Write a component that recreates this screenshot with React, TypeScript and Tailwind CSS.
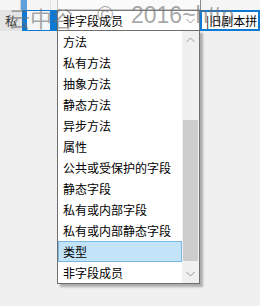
import React from "react";

const items = [
  "方法",
  "私有方法",
  "抽象方法",
  "静态方法",
  "异步方法",
  "属性",
  "公共或受保护的字段",
  "静态字段",
  "私有或内部字段",
  "私有或内部静态字段",
  "类型",
  "非字段成员",
];

function Chevron({ up }: { up?: boolean }) {
  return (
    <svg width="9" height="6" viewBox="0 0 9 6" className="block">
      <path
        d={up ? "M0.5 5 L4.5 1 L8.5 5" : "M0.5 1 L4.5 5 L8.5 1"}
        fill="none"
        stroke="#9a9a9a"
        strokeWidth="1"
      />
    </svg>
  );
}

export default function App() {
  return (
    <div className="relative w-[260px] h-[306px] overflow-hidden bg-[#f0f0f0] font-['Noto_Sans_CJK_SC',sans-serif] text-[12px] text-black">
      {/* top strip (previous row, cropped) */}
      <div className="flex h-[10px] bg-[#f5f5f5]">
        <div className="w-[21px] border-r border-[#d0d0d0]" />
        <div className="w-[6px] bg-[#5fa0dc]" />
        <div className="w-[24px] border-r border-[#e2e2e2]" />
        <div className="w-[6px]" />
        <div className="w-[143px] border-l border-b border-[#c8c8c8] bg-[#fafafa]" />
        <div className="flex-1 border-l border-[#8a8a8a]" />
      </div>

      {/* navigation bar row */}
      <div className="flex h-[21px]">
        <div className="w-[22px] bg-[#e4e4e4] flex items-center pl-[5px] text-[#333] text-[12px] leading-none">
          私
        </div>
        <div className="w-[35px] border-l-[5px] border-r-[7px] border-y border-[#0e78d5] bg-[#f4f6f8]" />
        <div className="w-[143px] bg-white border border-[#7a7a7a] flex items-center justify-between pl-[5px] pr-[4px]">
          <span className="leading-none">非字段成员</span>
          <Chevron />
        </div>
        <div className="flex-1 bg-white border-2 border-[#0e78d5] flex items-center pl-[4px] overflow-hidden whitespace-nowrap">
          <span className="leading-none">|旧剧本拼声</span>
        </div>
      </div>

      {/* dropdown popup */}
      <div className="absolute left-[57px] top-[30px] w-[143px] h-[254px] bg-white border border-[#6f6f6f] shadow-[3px_3px_2px_rgba(0,0,0,0.28)] flex">
        <div className="flex-1 flex flex-col">
          {items.map((t) => (
            <div
              key={t}
              className={
                t === "类型"
                  ? "h-[21px] flex items-center pl-[4px] bg-[#c3e3f8] border border-[#7ab8e6] leading-none"
                  : "h-[21px] flex items-center pl-[5px] leading-none"
              }
            >
              {t}
            </div>
          ))}
        </div>
        <div className="w-[17px] bg-[#f0f0f0] flex flex-col">
          <div className="h-[17px] flex items-center justify-center">
            <Chevron up />
          </div>
          <div className="flex-1 flex flex-col px-[1px]">
            <div className="h-[72px]" />
            <div className="h-[141px] bg-[#cdcdcd]" />
          </div>
          <div className="h-[19px] flex items-center justify-center">
            <Chevron />
          </div>
        </div>
      </div>

      {/* watermark */}
      <div className="pointer-events-none absolute left-0 top-[3px] h-[26px] w-[260px] text-[22px] leading-none text-[rgba(110,110,110,0.6)] whitespace-nowrap">
        <span className="absolute left-[8px] top-[3px] font-['Noto_Sans_CJK_SC',sans-serif]">云中谷</span>
        <span className="absolute left-[97px] top-[1px] font-['Liberation_Sans',sans-serif]">©</span>
        <span className="absolute left-[131px] top-[1px] font-['Liberation_Sans',sans-serif] text-[23px]">2016~http</span>
      </div>
    </div>
  );
}
